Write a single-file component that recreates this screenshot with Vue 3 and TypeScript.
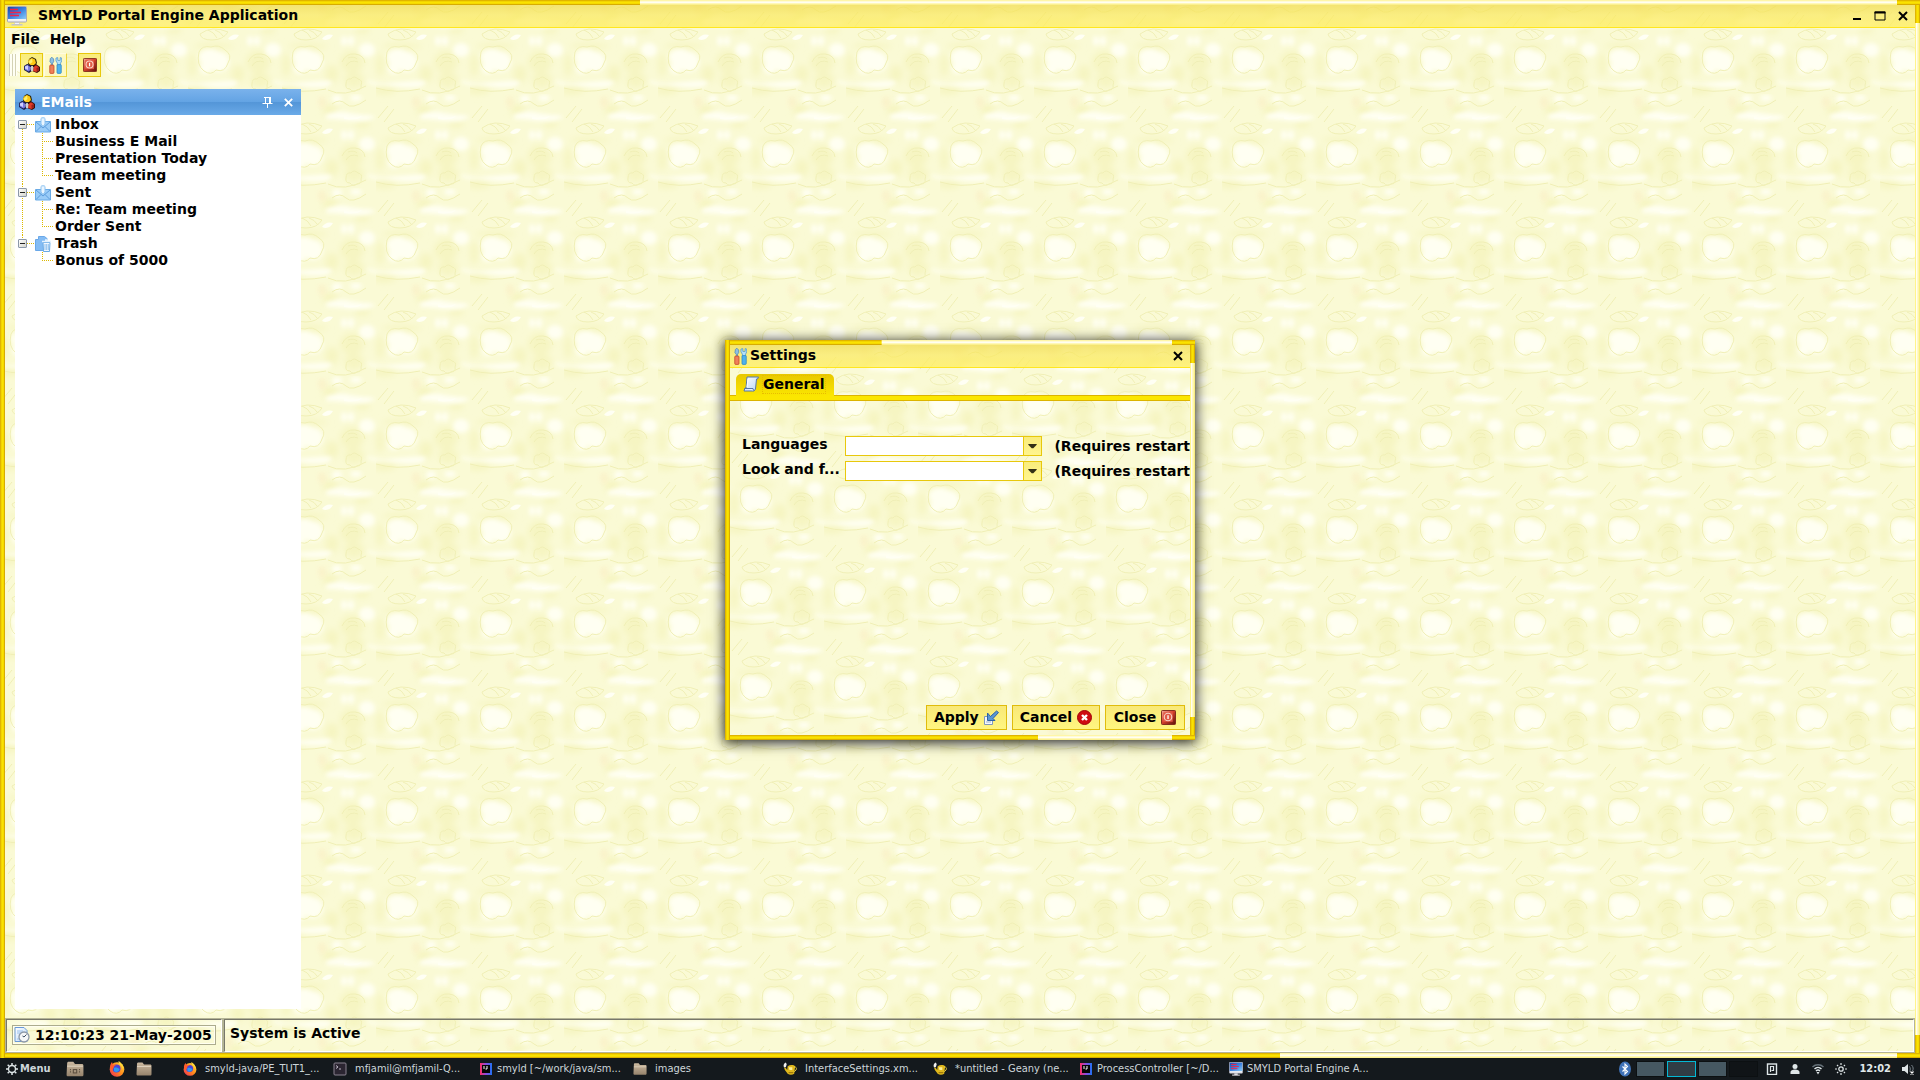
<script setup lang="ts">
import { ref } from 'vue'

interface Folder { name: string; icon: string; open: boolean; mails: string[] }
interface Task { icon: string; label: string; tight?: boolean }

const folders = ref<Folder[]>([
  { name: 'Inbox', icon: 'mail', open: true, mails: ['Business E Mail', 'Presentation Today', 'Team meeting'] },
  { name: 'Sent', icon: 'mail', open: true, mails: ['Re: Team meeting', 'Order Sent'] },
  { name: 'Trash', icon: 'trash', open: true, mails: ['Bonus of 5000'] },
])

const fields = [
  { id: 'language', label: 'Languages' },
  { id: 'look', label: 'Look and f...' },
]

const actions = [
  { label: 'Apply', icon: 'apply' },
  { label: 'Cancel', icon: 'cancel' },
  { label: 'Close', icon: 'power' },
]

const tasks: Task[] = [
  { icon: 'firefox', label: 'smyld-java/PE_TUT1_...' },
  { icon: 'terminal', label: 'mfjamil@mfjamil-Q...' },
  { icon: 'idea', label: 'smyld [~/work/java/sm...', tight: true },
  { icon: 'folder', label: 'images' },
  { icon: 'geany', label: 'InterfaceSettings.xm...' },
  { icon: 'geany', label: '*untitled - Geany (ne...' },
  { icon: 'idea', label: 'ProcessController [~/D...', tight: true },
  { icon: 'monitor', label: 'SMYLD Portal Engine A...', tight: true },
]

const tray = ['clipboard', 'user', 'wifi', 'sun']
</script>

<template>
  <svg class="defs" aria-hidden="true">
    <defs>
      <linearGradient id="g-screen" x1="0" y1="0" x2="1" y2="1"><stop offset="0" stop-color="#1c48a8" /><stop offset=".5" stop-color="#3a80e0" /><stop offset="1" stop-color="#8accf8" /></linearGradient>
      <linearGradient id="g-red" x1="0" y1="0" x2="1" y2="1"><stop offset="0" stop-color="#f4b0a0" /><stop offset=".45" stop-color="#d8422e" /><stop offset="1" stop-color="#5a1008" /></linearGradient>
      <linearGradient id="g-folder" x1="0" y1="0" x2="0" y2="1"><stop offset="0" stop-color="#cbb9a0" /><stop offset="1" stop-color="#96836c" /></linearGradient>
      <linearGradient id="g-fox" x1="1" y1="0" x2="0" y2="1"><stop offset="0" stop-color="#ffe03a" /><stop offset=".5" stop-color="#ff8a1c" /><stop offset="1" stop-color="#f0245c" /></linearGradient>
      <linearGradient id="g-idea" x1="0" y1="0" x2="1" y2="0"><stop offset="0" stop-color="#ff2d62" /><stop offset=".5" stop-color="#8a4be0" /><stop offset="1" stop-color="#1f72f2" /></linearGradient>
      <linearGradient id="g-page" x1="0" y1="0" x2="1" y2="1"><stop offset="0" stop-color="#ffffff" /><stop offset="1" stop-color="#b9d6f7" /></linearGradient>
    </defs>
    <symbol id="i-monitor" viewBox="0 0 20 20">
      <rect x=".5" y=".5" width="19" height="15.500" rx="1" fill="#f0f0f4" stroke="#a8a8b4" />
      <rect x="1" y="1" width="18" height="12" fill="url(#g-screen)" />
      <path d="M3 3.500h8M3 6.500h5M8 6.500h6M3 9.500h9" stroke="#f0244a" stroke-width="1.400" />
      <path d="M7.500 16h5v2h3v1.500h-11V18h3z" fill="#c4c4cc" />
      <path d="M8 17.500h4" stroke="#f4f4f6" />
    </symbol>
    <symbol id="i-blocks" viewBox="0 0 16 16">
      <path d="M5 2l3-2 4 2 1 4-2 3H5L4 6z" fill="#2a2208" />
      <path d="M4 5l1-2.500L8 1l3 1.500L12 6l-2 2H6z" fill="#ffc814" /><path d="M4.500 5L8 1.500 8.500 5 6 7z" fill="#fff06a" />
      <path d="M0 9l3-2 4 1 1 3v3l-3 2-5-3z" fill="#1c1c48" />
      <path d="M.8 9l2.700-1 3 2v3l-2 1.500-3.700-2z" fill="#7a7ae0" /><path d="M1 9.500l3-1V13l-3-1.500z" fill="#d0d0ff" />
      <path d="M9 9l3-2 4 3v4l-3 2-5-2z" fill="#3a0c08" />
      <path d="M9.500 10L12 8.200l3 2v3l-2.500 1.800-3.500-1z" fill="#e03c28" /><path d="M12.500 11l2.500-1v3l-2.500 1.500z" fill="#98201a" />
      <path d="M6.500 10.500L8 8.500l1.500 2-.5 3.500H7z" fill="#d0d0d0" />
    </symbol>
    <symbol id="i-tools" viewBox="1 0 14 18">
      <path d="M2.500 1.500L4 0 6 2v3L4.800 6.500V9H3.500V6.500L2 5z" fill="#8fc0e4" stroke="#4a86b8" stroke-width=".8" />
      <rect x="1.800" y="8.500" width="4.600" height="9" rx="1" fill="#f0805a" stroke="#c04424" stroke-width=".8" />
      <path d="M8.500 1v3l1.500 2.500V9h3.500V6.500L14.700 4V1L13 .5v3h-2.500v-3z" fill="#b4e0fa" stroke="#4a94cc" stroke-width=".8" />
      <rect x="9.600" y="8" width="4.600" height="9.500" rx="1" fill="#4fb2ec" stroke="#2a84c4" stroke-width=".8" />
    </symbol>
    <symbol id="i-power" viewBox="0 0 16 16">
      <rect x=".5" y=".5" width="15" height="15" rx="1" fill="url(#g-red)" stroke="#7a2418" />
      <rect x="2.500" y="2.500" width="10" height="10" fill="#e05a46" />
      <circle cx="7.500" cy="7.500" r="4" fill="none" stroke="#f8d4c8" stroke-width="1.200" /><path d="M7.500 5.500v4" stroke="#fff" stroke-width="1.400" />
    </symbol>
    <symbol id="i-mail" viewBox="0 0 16 16">
      <path d="M.5 4.500h15v10.500H.5z" fill="#9accf8" stroke="#6aabe6" />
      <path d="M1 5l7 6 7-6M1 14.500l5-5M15 14.500l-5-5" fill="none" stroke="#5c9cdc" />
      <path d="M6 1.500C6 .5 10 .5 10 1.500V7L8 9.500 6 7z" fill="#eaf5ff" stroke="#8cc2f0" />
    </symbol>
    <symbol id="i-trash" viewBox="0 0 16 16">
      <path d="M3.500 .5h6l3 2.500v11.500h-12V3.500h3z" fill="#84bcf4" stroke="#6aa8e8" />
      <path d="M8 6.500h7l-.5 9h-6z" fill="#f2f8ff" stroke="#6aaae4" />
      <path d="M7 5.500h9M10 4h3" stroke="#e4f2ff" fill="none" stroke-width="1.400" /><path d="M10 8v6M11.700 8v6M13.300 8v6" stroke="#74b0e8" fill="none" stroke-width=".8" />
    </symbol>
    <symbol id="i-page" viewBox="0 0 16 16">
      <path d="M4 1h11.500l-1 2h-1l-1 10-1.500 2H1l1-3h1z" fill="url(#g-page)" stroke="#5578a8" />
      <path d="M1.500 12.500h8.500l.5 2" fill="#e8f2ff" stroke="#5578a8" /><path d="M5 3l-1 8" stroke="#fff" />
    </symbol>
    <symbol id="i-apply" viewBox="0 0 15 15">
      <path d="M.5 6.500h8v8h-8z" fill="#f6f8fc" stroke="#8098bc" /><path d="M2 12h5" stroke="#9ab0d0" />
      <path d="M3.500 3v7.500H11L9 8.500 14.500 2.500 12.500 1 6.500 6.500z" fill="#5a96d4" stroke="#2f62a4" />
    </symbol>
    <symbol id="i-cancel" viewBox="0 0 15 15">
      <circle cx="7.500" cy="7.500" r="7" fill="#cf0c10" stroke="#a00408" /><path d="M5 5l5 5M10 5l-5 5" stroke="#fff" stroke-width="2.400" />
    </symbol>
    <symbol id="i-clock" viewBox="0 0 16 16">
      <path d="M1 .5h9l3 3V14.500H1z" fill="url(#g-page)" stroke="#6a98d8" /><path d="M3 4h6M3 6h4M3 12h4" stroke="#9ac0ec" />
      <circle cx="10" cy="10" r="5" fill="#f4f6f8" stroke="#8c98a8" stroke-width="1.300" /><path d="M10 10l2.500-2.500M10 10l-1.500-1" stroke="#3a4a60" />
    </symbol>
    <symbol id="i-gear" viewBox="0 0 12 12">
      <circle cx="6" cy="6" r="3.500" fill="none" stroke="#dde4e6" stroke-width="1.400" />
      <path d="M6 0v2M6 10v2M0 6h2M10 6h2M1.700 1.700l1.500 1.500M8.800 8.800l1.500 1.500M10.300 1.700L8.800 3.200M1.700 10.300l1.500-1.500" stroke="#dde4e6" stroke-width="1.500" />
    </symbol>
    <symbol id="i-folder" viewBox="0 0 16 14">
      <path d="M1 2C1 1 1.500.5 2.500.5h4L8 2.500h6c1 0 1.500.5 1.500 1.500v8c0 1-.5 1.500-1.500 1.500H2C1 13.500.5 13 .5 12z" fill="url(#g-folder)" /><path d="M1 4.500h14" stroke="#ddd0bc" />
    </symbol>
    <symbol id="i-files" viewBox="0 0 16 14">
      <path d="M1 2C1 1 1.500.5 2.500.5h4L8 2.500h6c1 0 1.500.5 1.500 1.500v8c0 1-.5 1.500-1.500 1.500H2C1 13.500.5 13 .5 12z" fill="url(#g-folder)" /><path d="M1 4.500h14" stroke="#ddd0bc" />
      <path d="M4 7v4M12 7v4" stroke="#5e5040" stroke-dasharray="1 1" /><rect x="6.500" y="7.500" width="3" height="3" fill="none" stroke="#5e5040" />
    </symbol>
    <symbol id="i-firefox" viewBox="0 0 16 16">
      <circle cx="8" cy="8.500" r="7.300" fill="url(#g-fox)" />
      <circle cx="7.500" cy="7.500" r="4" fill="#4a44d8" /><path d="M1 6c0-2 1-4 2-5l1 3c1.500-.8 3-.6 4 0-2 0-3 1-3 2L3.500 9z" fill="#ff5a2c" />
      <path d="M9.500 0c3.500 2 5.500 5 4.500 9 0-2-2-5-3-5-1-1-1.500-3-1.500-4z" fill="#ffd93a" /><path d="M5 7c2-1 4 0 5.500 1 0 3-4 4-5.500 2z" fill="#2d9af0" />
    </symbol>
    <symbol id="i-terminal" viewBox="0 0 14 14">
      <rect x="1" y="1" width="12" height="12" rx="1" fill="#2b2531" stroke="#8a8390" /><path d="M3 3.500l2 1.500-2 1.500M6 7h2" stroke="#cfc8d6" stroke-width=".9" fill="none" />
    </symbol>
    <symbol id="i-idea" viewBox="0 0 14 14">
      <path d="M1 1h12v12H1z" fill="url(#g-idea)" /><rect x="3" y="3" width="8" height="8" fill="#050505" /><path d="M5 4v3M8 4v3H6.500" stroke="#fff" stroke-width="1" fill="none" />
    </symbol>
    <symbol id="i-geany" viewBox="0 0 15 14">
      <path d="M5 4c3-2 7-1 8 0l-1 8c-2 1.500-5 1.500-7 0L2 8 1 5l2 1 1.500 2z" fill="#e0b81c" />
      <path d="M6 5h4v3H7z" fill="#fff09a" /><path d="M12 5c2-.5 3 1 2 3l-2 2" stroke="#f0d040" fill="none" /><path d="M1 5C0 3 1 1 3 0l1 2-1 3z" fill="#f0f0f0" /><path d="M6 11h5" stroke="#8a6408" />
    </symbol>
    <symbol id="i-bluetooth" viewBox="0 0 12 16">
      <ellipse cx="6" cy="8" rx="6" ry="7.500" fill="#3f72b8" /><path d="M3.500 5.500l5 5L6 13V3l2.500 2.500-5 5" fill="none" stroke="#fff" stroke-width="1.100" />
    </symbol>
    <symbol id="i-clipboard" viewBox="0 0 12 12">
      <rect x="1.500" y="1" width="9" height="10.500" fill="none" stroke="#dfe6e8" stroke-width="1.400" /><path d="M4.500 9V3.500h3v4h-2" fill="none" stroke="#dfe6e8" stroke-width="1.200" />
    </symbol>
    <symbol id="i-user" viewBox="0 0 12 12"><circle cx="6" cy="3.500" r="2.500" fill="#dfe6e8" /><path d="M1.500 11V9c0-1.500 2-2.500 4.500-2.500s4.500 1 4.500 2.500v2z" fill="#dfe6e8" /></symbol>
    <symbol id="i-wifi" viewBox="0 0 12 12">
      <path d="M.5 4c3-3 8-3 11 0" fill="none" stroke="#67727a" stroke-width="1.400" /><path d="M2.500 6c2-2 5-2 7 0M4 8c1.200-1.200 2.800-1.200 4 0" fill="none" stroke="#dfe6e8" stroke-width="1.400" /><path d="M4.500 9h3L6 11.500z" fill="#dfe6e8" />
    </symbol>
    <symbol id="i-sun" viewBox="0 0 12 12">
      <circle cx="6" cy="6" r="2.200" fill="none" stroke="#dfe6e8" stroke-width="1.300" /><path d="M6 0v2M6 10v2M0 6h2M10 6h2M2 2l1.200 1.200M8.800 8.800L10 10M10 2L8.800 3.200M2 10l1.200-1.200" stroke="#dfe6e8" stroke-width="1.200" />
    </symbol>
    <symbol id="i-speaker" viewBox="0 0 12 12">
      <path d="M0 4h2.500L6 1v10L2.500 8H0z" fill="#dfe6e8" /><path d="M7.500 3.500c1 1.500 1 3.500 0 5M9.500 2c2 2 2 4 1 6" fill="none" stroke="#78838a" /><path d="M8.500 8.500l3 3M11.500 8.500l-3 3" stroke="#fff" stroke-width="1.200" />
    </symbol>
    <symbol id="i-close" viewBox="0 0 12 12"><path d="M2 2l8 8M10 2l-8 8" stroke="currentColor" stroke-width="2" /></symbol>
    <symbol id="i-max" viewBox="0 0 12 12"><path d="M1 2h10v8H1z" fill="none" stroke="currentColor" /><path d="M.5 2.500h11" stroke="currentColor" stroke-width="2" /></symbol>
    <symbol id="i-min" viewBox="0 0 12 12"><path d="M2 9h8" stroke="currentColor" stroke-width="2" /></symbol>
    <symbol id="i-pin" viewBox="0 0 11 11"><path d="M2 .5h7M3.500 .5v6M.5 6.500h10M5.500 6.500V11M8.500 .5v6" fill="none" stroke="currentColor" /><path d="M7.500 1v5.500" stroke="currentColor" /></symbol>
  </svg>

  <div class="screen">
    <main class="frame app">
      <header class="titlebar">
        <svg class="app-icon"><use href="#i-monitor" /></svg>
        <h1>SMYLD Portal Engine Application</h1>
        <button v-for="b in ['min', 'max', 'close']" :key="b" type="button" class="win-btn" :aria-label="b"><svg><use :href="`#i-${b}`" /></svg></button>
      </header>

      <nav class="menubar">
        <button type="button">File</button>
        <button type="button">Help</button>
      </nav>

      <div class="toolbar">
        <span class="grip"></span>
        <button type="button" aria-label="EMails"><svg class="i16"><use href="#i-blocks" /></svg></button>
        <button type="button" class="hot" aria-label="Settings"><svg class="tall"><use href="#i-tools" /></svg></button>
        <button type="button" class="apart" aria-label="Exit"><svg class="i14"><use href="#i-power" /></svg></button>
      </div>

      <div class="workspace">
        <aside class="panel">
          <header>
            <svg class="i16"><use href="#i-blocks" /></svg>
            <h2>EMails</h2>
            <button type="button" aria-label="Pin"><svg><use href="#i-pin" /></svg></button>
            <button type="button" aria-label="Close panel"><svg><use href="#i-close" /></svg></button>
          </header>
          <ul class="tree">
            <li v-for="f in folders" :key="f.name" class="folder">
              <div class="node">
                <button type="button" class="toggle" :aria-label="f.name" :aria-expanded="f.open" @click="f.open = !f.open"></button>
                <svg class="i16"><use :href="`#i-${f.icon}`" /></svg>
                <span>{{ f.name }}</span>
              </div>
              <ul v-if="f.open">
                <li v-for="m in f.mails" :key="m" class="mail">{{ m }}</li>
              </ul>
            </li>
          </ul>
        </aside>
      </div>

      <footer class="status">
        <div class="cell clock">
          <div class="clock-box"><svg class="i16"><use href="#i-clock" /></svg><span>12:10:23 21-May-2005</span></div>
        </div>
        <div class="cell message">System is Active</div>
      </footer>
    </main>

    <footer class="taskbar">
      <button type="button" class="menu"><svg class="i12"><use href="#i-gear" /></svg>Menu</button>
      <div class="launchers">
        <button type="button" class="files" aria-label="File manager"><svg class="big"><use href="#i-files" /></svg></button>
        <button type="button" aria-label="Firefox"><svg class="i16"><use href="#i-firefox" /></svg></button>
        <button type="button" aria-label="Home folder"><svg class="i16"><use href="#i-folder" /></svg></button>
      </div>
      <div class="tasks">
        <button v-for="t in tasks" :key="t.label" type="button" :class="{ tight: t.tight }">
          <svg class="i14"><use :href="`#i-${t.icon}`" /></svg>{{ t.label }}
        </button>
      </div>
      <div class="tray">
        <svg class="bt"><use href="#i-bluetooth" /></svg>
        <div class="pager"><span></span><span class="current"></span><span></span><span class="empty"></span></div>
        <div class="indicators">
          <svg v-for="i in tray" :key="i" class="i12"><use :href="`#i-${i}`" /></svg>
        </div>
        <time>12:02</time>
        <svg class="i12"><use href="#i-speaker" /></svg>
      </div>
    </footer>

    <div class="overlay">
      <section class="frame dialog" role="dialog" aria-labelledby="dialog-title">
        <header class="titlebar">
          <svg class="tall"><use href="#i-tools" /></svg>
          <h2 id="dialog-title">Settings</h2>
          <button type="button" class="win-btn" aria-label="Close dialog"><svg><use href="#i-close" /></svg></button>
        </header>
        <div class="tabs" role="tablist">
          <button type="button" role="tab" aria-selected="true"><svg class="i16"><use href="#i-page" /></svg><span>General</span></button>
        </div>
        <form class="form" @submit.prevent>
          <div v-for="f in fields" :key="f.id" class="row">
            <label :for="f.id">{{ f.label }}</label>
            <div class="combo">
              <select :id="f.id"><option value=""></option></select>
              <span class="arrow"><svg viewBox="0 0 10 6"><path d="M0 0h10v1L6 5H4L0 1z" fill="#333016" /></svg></span>
            </div>
            <span class="hint">(Requires restart</span>
          </div>
          <div class="actions">
            <button v-for="a in actions" :key="a.label" type="button">{{ a.label }}<svg><use :href="`#i-${a.icon}`" /></svg></button>
          </div>
        </form>
      </section>
    </div>
  </div>
</template>

<style>
body { margin: 0; background: #14191d; }
</style>

<style scoped>
* { box-sizing: border-box; }
button { font: inherit; color: inherit; background: none; border: 0; padding: 0; margin: 0; }
h1, h2 { font: inherit; margin: 0; }
ul { list-style: none; margin: 0; padding: 0; }
svg { display: block; flex: none; }
.defs { position: absolute; width: 0; height: 0; }
.i12 { width: 12px; height: 12px; }
.i14 { width: 14px; height: 14px; }
.i16 { width: 16px; height: 16px; }
.tall { width: 13px; height: 17px; }

.screen {
  position: relative;
  display: flex;
  flex-direction: column;
  min-height: 100vh;
  font: bold 14px/17px "DejaVu Sans", sans-serif;
  color: #000;
}

/* Segmented gold and cream window border over a floral wallpaper tile */
.frame {
  --gold-v: linear-gradient(#e0b400 0 1px, #f2d400 1px 2px, #fbe200 2px 3px, #f5da00 3px 4px, #d8ac00 4px);
  --gold-h: linear-gradient(90deg, #e0b400 0 1px, #f2d400 1px 2px, #fbe200 2px 3px, #f5da00 3px 4px, #d8ac00 4px);
  --cream-v: linear-gradient(#fff6a8 0 1px, #fffbd8 1px 2px, #fffef2 2px 3px, #fff8b8 3px 4px, #fbf090 4px);
  --cream-h: linear-gradient(90deg, #fff48c 0 1px, #fffef4 1px 2px, #fff9c8 2px 3px, #fff6a8 3px 4px, #f8ec80 4px);
  --tile: url("data:image/svg+xml,%3Csvg xmlns='http://www.w3.org/2000/svg' width='94' height='94'%3E%3Cfilter id='b' x='-40%25' y='-40%25' width='180%25' height='180%25'%3E%3CfeGaussianBlur stdDeviation='3'/%3E%3C/filter%3E%3Cfilter id='w' x='-40%25' y='-40%25' width='180%25' height='180%25'%3E%3CfeGaussianBlur stdDeviation='2'/%3E%3C/filter%3E%3Cfilter id='s'%3E%3CfeGaussianBlur stdDeviation='.7'/%3E%3C/filter%3E%3Crect width='94' height='94' fill='%23fafad5'/%3E%3Cg filter='url(%23b)' fill='%23f6f5c2'%3E%3Cellipse cx='70' cy='62' rx='12' ry='11'/%3E%3Cellipse cx='8' cy='90' rx='12' ry='5'/%3E%3Cellipse cx='8' cy='-4' rx='12' ry='5'/%3E%3Cellipse cx='50' cy='74' rx='7' ry='9'/%3E%3Cellipse cx='48' cy='16' rx='8' ry='6'/%3E%3Cellipse cx='80' cy='30' rx='8' ry='4'/%3E%3Cellipse cx='72' cy='80' rx='10' ry='8'/%3E%3Cellipse cx='26' cy='46' rx='20' ry='3'/%3E%3Cellipse cx='4' cy='65' rx='4' ry='12'/%3E%3Cellipse cx='98' cy='65' rx='4' ry='12'/%3E%3C/g%3E%3Cg filter='url(%23w)' fill='%23fffff2'%3E%3Cellipse cx='22' cy='57' rx='11' ry='8'/%3E%3Cellipse cx='31' cy='62' rx='10' ry='10'/%3E%3Cellipse cx='18' cy='68' rx='6' ry='6'/%3E%3Cellipse cx='85' cy='50' rx='8' ry='7'/%3E%3Cellipse cx='-9' cy='50' rx='8' ry='7'/%3E%3Cellipse cx='62' cy='41' rx='3' ry='5'/%3E%3Cellipse cx='69' cy='41' rx='3' ry='5'/%3E%3Cpath d='M-8 80q8 4 20 3t26-2 12 2q-4 6-24 4t-34-2z'/%3E%3Cpath d='M86 80q8 4 20 3v3q-12 0-20-3z'/%3E%3Cpath d='M44 21q12-5 20-3t20 3 8 3q-10 5-24 3t-24-2z'/%3E%3Cellipse cx='55' cy='5' rx='5' ry='4'/%3E%3Cellipse cx='74' cy='4' rx='6' ry='3'/%3E%3C/g%3E%3Cg filter='url(%23s)' fill='%23fffff4'%3E%3Cpath d='M40 39q4-6 11-4-4 7-11 4zM62 22q8 3 18 0-4 5-18 3z'/%3E%3C/g%3E%3Cg filter='url(%23s)' fill='none' stroke='%23f0efb6' stroke-width='1'%3E%3Cpath d='M12 34q12-9 28-2-5 8-16 8t-12-6zM20 30q6 2 9 8M27 30q6 2 8 6'/%3E%3Cpath d='M11 52q3-7 12-5 8-3 14 3 8 5 3 13-3 10-12 7-5 6-12 1-8-6-5-19z'/%3E%3Cpath d='M60 62q4-9 13-8t10 9M64 66q4-7 12-4M66 58q6-2 9 1'/%3E%3Cpath d='M64 84q0-6 5-5 3-4 7 0 5 1 3 6 1 5-4 5-4 3-7-1-5 0-4-5z'/%3E%3Cpath d='M46 90q16 8 38-4M0 88q20 6 44 1M50 10q8-6 14 0t20-4M2 24l10-12M8 28l10-13'/%3E%3C/g%3E%3Cellipse cx='40' cy='8' rx='4' ry='6' fill='%23fbeec4' opacity='.6' filter='url(%23w)'/%3E%3C/svg%3E");
  padding: 5px;
  background:
    var(--gold-h) left top / 5px 100% no-repeat,
    var(--gold-v) left top / 33.333% 5px no-repeat,
    var(--gold-v) right top / 23px 5px no-repeat,
    var(--gold-v) left bottom / 66.667% 5px no-repeat,
    var(--gold-v) right bottom / 23px 5px no-repeat,
    var(--gold-h) right top / 5px 23px no-repeat,
    var(--gold-h) right bottom / 5px 23px no-repeat,
    var(--cream-v) left top / 100% 5px no-repeat,
    var(--cream-v) left bottom / 100% 5px no-repeat,
    var(--cream-h) right top / 5px 100% no-repeat,
    var(--tile) 0 0 / 94px 94px;
}

.titlebar {
  display: flex;
  align-items: center;
  height: 23px;
  border-bottom: 1px solid #ffe620;
  background: linear-gradient(rgba(240, 218, 70, .7), rgba(250, 232, 90, .68) 45%, rgba(255, 238, 90, .75));
}
.titlebar h1, .titlebar h2 { flex: 1; padding-bottom: 1px; }
.win-btn { width: 23px; display: grid; place-items: center; }
.win-btn svg { width: 12px; height: 12px; }

.app { flex: 1; display: flex; flex-direction: column; }
.app .titlebar { padding-right: 1px; }
.app-icon { width: 20px; height: 20px; margin: 0 11px 0 2px; }

.menubar { display: flex; gap: 10px; height: 21px; padding: 1px 0 0 6px; align-items: center; }

.toolbar { display: flex; gap: 1px; padding: 4px 4px 5px; }
.grip { width: 8px; height: 22px; margin: 1px 2px 0 0; background: repeating-linear-gradient(90deg, #d4d2b4 0 1px, #fffff4 1px 3px); }
.toolbar button { width: 23px; height: 24px; display: grid; place-items: center; border: 1px solid #e8c80c; background: linear-gradient(#f9ec7c, #fff58e); }
.toolbar .hot { border-color: #fffbe0 #ecd440 #ecd440 #fffbe0; background: rgba(255, 250, 190, .7); }
.toolbar .apart { margin-left: 10px; }

.workspace { flex: 1; display: flex; padding: 7px 10px 10px; }
.panel { width: 286px; background: #fff; }
.panel header { display: flex; align-items: center; height: 26px; padding: 0 2px 0 4px; color: #fff; background: linear-gradient(#7ab2ec, #64a4e4 48%, #5496d8 52%, #6aaae8); }
.panel h2 { flex: 1; margin-left: 6px; }
.panel header button { width: 21px; display: grid; place-items: center; }
.panel header svg:not(.i16) { width: 11px; height: 11px; }

.tree { padding: 1px 0 0 3px; }
.folder { background: repeating-linear-gradient(#dcb800 0 1px, transparent 1px 2px) 4px 0 / 1px 100% no-repeat; }
.folder:first-child { background-position: 4px 9px; }
.folder:last-child { background-size: 1px 9px; }
.node { display: flex; align-items: center; height: 17px; background: repeating-linear-gradient(90deg, #dcb800 0 1px, transparent 1px 2px) 9px 8px / 8px 1px no-repeat; }
.toggle { width: 9px; height: 9px; border: 1px solid #8c98a8; border-radius: 1px; background: linear-gradient(#222, #222) center / 5px 1px no-repeat, linear-gradient(135deg, #fff, #d4d4cc); margin-right: 8px; }
.node span { margin-left: 4px; }
.mail {
  height: 17px;
  padding-left: 37px;
  background:
    repeating-linear-gradient(90deg, #dcb800 0 1px, transparent 1px 2px) 24px 8px / 12px 1px no-repeat,
    repeating-linear-gradient(#dcb800 0 1px, transparent 1px 2px) 24px 0 / 1px 100% no-repeat;
}
.mail:last-child { background-size: 12px 1px, 1px 8px; }

.status { display: flex; height: 34px; }
.cell { border: 1px solid; border-color: #77776a #fff #fff #77776a; outline: 1px solid #b4b496; margin: 0 1px 1px; }
.clock { width: 216px; padding: 5px; }
.clock-box { display: flex; align-items: center; height: 20px; width: 204px; gap: 5px; padding-left: 1px; border: 1px solid #acac8e; box-shadow: inset 0 0 0 1px #fffff0; white-space: nowrap; }
.message { flex: 1; padding: 5px; }

.taskbar {
  display: flex;
  align-items: center;
  height: 22px;
  font: 11px/16px "DejaVu Sans Condensed", "DejaVu Sans", sans-serif;
  color: #cdd6da;
  background: #14191d;
}
.menu { display: flex; align-items: center; gap: 2px; width: 66px; padding-left: 6px; font-weight: bold; }
.launchers { display: flex; align-items: center; gap: 11px; width: 116px; }
.files { margin-right: 14px; }
.big { width: 18px; height: 16px; }
.tasks { flex: 1; display: flex; }
.tasks button { display: flex; align-items: center; gap: 8px; width: 150px; padding-left: 1px; white-space: nowrap; }
.tasks .tight { gap: 4px; padding-left: 0; margin-left: -3px; width: 153px; }
.tray { display: flex; align-items: center; padding-right: 6px; }
.bt { width: 12px; height: 16px; margin-right: 5px; }
.pager { display: flex; gap: 2px; }
.pager span { width: 29px; height: 16px; border: 1px solid #0c1012; background: #465862; }
.pager .current { border-color: #04b8d4; background: #303c44; }
.pager .empty { background: #101417; }
.indicators { display: flex; gap: 11px; margin: 0 12px 0 8px; }
.tray time { font-weight: bold; margin-right: 11px; color: #e0e8ea; }

.overlay { position: absolute; inset: 0; display: grid; place-items: center; }
.dialog { display: flex; flex-direction: column; width: 470px; height: 400px; box-shadow: 0 2px 12px 1px rgba(0, 0, 0, .85); background-origin: border-box, border-box, border-box, border-box, border-box, border-box, border-box, border-box, border-box, border-box, content-box; }
.dialog .titlebar { padding: 0 1px 0 4px; }
.dialog .titlebar h2 { margin-left: 3px; }
.tabs { padding: 6px 6px 5px; background: linear-gradient(#dcb400 0 1px, #fbe600 1px 5px, #dcb400 5px) left bottom / 100% 6px no-repeat; }
.tabs button { display: flex; align-items: center; gap: 4px; width: 98px; height: 22px; padding: 0 0 2px 7px; border-radius: 5px 5px 0 0; background: linear-gradient(#e8c800, #fbe600); }
.tabs span { outline: 1px dotted #e8bc00; }
.form { flex: 1; display: flex; flex-direction: column; padding: 35px 0 0 12px; overflow: hidden; }
.row { display: flex; align-items: center; height: 20px; margin-bottom: 5px; white-space: nowrap; }
.row label { width: 103px; padding-bottom: 4px; }
.combo { display: grid; width: 198px; height: 20px; }
.combo > * { grid-area: 1 / 1; }
.combo select { appearance: none; font: inherit; border: 1px solid #e8c80c; border-radius: 0; background: #fff; margin: 0; padding: 0 22px 0 4px; }
.arrow { justify-self: end; width: 19px; border: 1px solid #e8c80c; background: linear-gradient(#f9ec7c, #fff58e); display: grid; place-items: center; pointer-events: none; }
.arrow svg { width: 9px; height: 5px; }
.hint { margin-left: 12px; }
.actions { display: flex; justify-content: flex-end; gap: 5px; margin: auto 5px 5px 0; }
.actions button { display: flex; align-items: center; justify-content: center; gap: 5px; min-width: 80px; height: 25px; padding: 0 7px; border: 1px solid #e0bc0c; background: linear-gradient(#f8e878, #fff680); }
.actions svg { width: 15px; height: 15px; }
</style>
